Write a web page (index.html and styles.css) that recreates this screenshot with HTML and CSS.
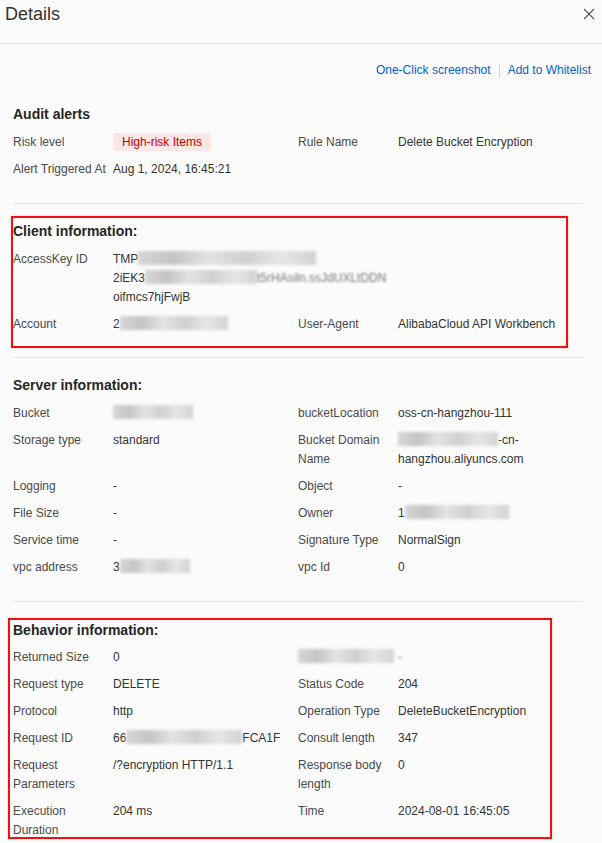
FILE: index.html
```html
<!DOCTYPE html>
<html>
<head>
  <title>Details</title>
  <link rel="stylesheet" href="styles.css">
</head>
<body>
  <div class="drawer">
    <div class="drawer-header">
      <h1>Details</h1>
      <button class="close" aria-label="Close">
        <svg width="12" height="12" viewBox="0 0 12 12"><path d="M1 1 L11 11 M11 1 L1 11" stroke="#555" stroke-width="1.1" fill="none"/></svg>
      </button>
    </div>

    <div class="drawer-body">
      <div class="actions">
        <a href="#">One-Click screenshot</a>
        <span class="sep"></span>
        <a href="#">Add to Whitelist</a>
      </div>

      <!-- Audit alerts -->
      <section class="block first">
        <h2>Audit alerts</h2>
        <div class="fields">
          <div class="label">Risk level</div>
          <div class="value"><span class="tag">High-risk Items</span></div>
          <div class="label">Rule Name</div>
          <div class="value">Delete Bucket Encryption</div>

          <div class="label">Alert Triggered At</div>
          <div class="value">Aug 1, 2024, 16:45:21</div>
          <div class="label"></div>
          <div class="value"></div>
        </div>
      </section>

      <!-- Client information -->
      <section class="block client">
        <span class="mark mark-client"></span>
        <h2>Client information:</h2>
        <div class="fields">
          <div class="label">AccessKey ID</div>
          <div class="value wide">
            TMP<span class="redact w178"></span><br>
            2iEK3<span class="redact w112"></span><span class="fuzzy">t5rHAsiln.ssJdUXLtDDN</span><br>
            oifmcs7hjFwjB
          </div>

          <div class="label">Account</div>
          <div class="value">2<span class="redact w108"></span></div>
          <div class="label">User-Agent</div>
          <div class="value">AlibabaCloud API Workbench</div>
        </div>
      </section>

      <!-- Server information -->
      <section class="block server">
        <h2>Server information:</h2>
        <div class="fields">
          <div class="label">Bucket</div>
          <div class="value"><span class="redact w80"></span></div>
          <div class="label">bucketLocation</div>
          <div class="value">oss-cn-hangzhou-111</div>

          <div class="label">Storage type</div>
          <div class="value">standard</div>
          <div class="label">Bucket Domain Name</div>
          <div class="value"><span class="redact w100"></span>-cn-<br>hangzhou.aliyuncs.com</div>

          <div class="label">Logging</div>
          <div class="value">-</div>
          <div class="label">Object</div>
          <div class="value">-</div>

          <div class="label">File Size</div>
          <div class="value">-</div>
          <div class="label">Owner</div>
          <div class="value">1<span class="redact w104"></span></div>

          <div class="label">Service time</div>
          <div class="value">-</div>
          <div class="label">Signature Type</div>
          <div class="value">NormalSign</div>

          <div class="label">vpc address</div>
          <div class="value">3<span class="redact w70"></span></div>
          <div class="label">vpc Id</div>
          <div class="value">0</div>
        </div>
      </section>

      <!-- Behavior information -->
      <section class="block behavior">
        <span class="mark mark-behavior"></span>
        <h2>Behavior information:</h2>
        <div class="fields">
          <div class="label">Returned Size</div>
          <div class="value">0</div>
          <div class="label"><span class="redact w96"></span></div>
          <div class="value"><span class="fuzzy">-</span></div>

          <div class="label">Request type</div>
          <div class="value">DELETE</div>
          <div class="label">Status Code</div>
          <div class="value">204</div>

          <div class="label">Protocol</div>
          <div class="value">http</div>
          <div class="label">Operation Type</div>
          <div class="value">DeleteBucketEncryption</div>

          <div class="label">Request ID</div>
          <div class="value">66<span class="redact w116"></span>FCA1F</div>
          <div class="label">Consult length</div>
          <div class="value">347</div>

          <div class="label">Request Parameters</div>
          <div class="value">/?encryption HTTP/1.1</div>
          <div class="label">Response body length</div>
          <div class="value">0</div>

          <div class="label">Execution Duration</div>
          <div class="value">204 ms</div>
          <div class="label">Time</div>
          <div class="value">2024-08-01 16:45:05</div>
        </div>
      </section>
    </div>
  </div>
</body>
</html>
```

FILE: styles.css
```css
/* Drawer: alert details */
body {
  margin: 0;
  font-family: "Liberation Sans", Arial, sans-serif;
  font-size: 12px;
  color: #333;
  background: #fbfbfb;
}

.drawer {
  width: 602px;
}

.drawer-header {
  display: flex;
  justify-content: space-between;
  align-items: flex-start;
  height: 43px;
  padding: 0 7px 0 5px;
  border-bottom: 1px solid #e3e3e3;
}

.drawer-header h1 {
  margin: 0;
  font-size: 18px;
  font-weight: normal;
  line-height: 28px;
  color: #333;
}

.close {
  margin-top: 8px;
  padding: 0;
  border: none;
  background: none;
  cursor: pointer;
}

.drawer-body {
  padding: 0 19px 0 13px;
}

.actions {
  display: flex;
  justify-content: flex-end;
  align-items: center;
  margin: 17px -8px 0 0;
  line-height: 19px;
}

.actions a {
  color: #0064c8;
  text-decoration: none;
}

.actions .sep {
  width: 1px;
  height: 14px;
  margin: 0 8px;
  background: #d8d8d8;
}

.block {
  position: relative;
  border-top: 1px solid #e6e6e6;
  padding: 17px 0 23px;
}

.block.first {
  border-top: none;
  padding-top: 24px;
  padding-bottom: 24px;
}

.block.server {
  padding-bottom: 24px;
}

.block.behavior {
  padding-top: 18px;
}

.block h2 {
  margin: 0 0 9px;
  font-size: 14px;
  font-weight: bold;
  line-height: 20px;
  color: #262626;
}

.behavior h2 {
  margin-bottom: 8px;
}

.fields {
  display: grid;
  grid-template-columns: 100px 185px 100px 185px;
  row-gap: 8px;
  line-height: 19px;
}

.label {
  padding-right: 4px;
  color: #4a4a4a;
}

.value {
  color: #333;
}

.value.wide {
  grid-column: 2 / 5;
}

.tag {
  display: inline-block;
  padding: 0 9px;
  line-height: 18px;
  color: #c40000;
  background: #fde6e6;
  border-radius: 2px;
}

/* masked data */
.redact {
  display: inline-block;
  height: 14px;
  vertical-align: -2px;
  background: linear-gradient(90deg, #d6d6d6, #c4c4c4 20%, #e3e3e3 40%, #cfcfcf 60%, #e6e6e6 80%, #d2d2d2);
  filter: blur(1.6px);
}

.fuzzy {
  color: #777;
  filter: blur(1px);
}

.w70 { width: 70px; }
.w80 { width: 80px; }
.w96 { width: 96px; }
.w100 { width: 100px; }
.w104 { width: 104px; }
.w108 { width: 108px; }
.w112 { width: 112px; }
.w116 { width: 116px; }
.w178 { width: 178px; }

/* red annotation frames */
.mark {
  position: absolute;
  border: 2px solid #f01010;
  box-shadow: 0 0 1px #ff8080;
  pointer-events: none;
}

.mark-client {
  top: 12px;
  left: -2px;
  width: 553px;
  height: 128px;
}

.mark-behavior {
  top: 16px;
  left: -5px;
  width: 540px;
  height: 217px;
}
```
